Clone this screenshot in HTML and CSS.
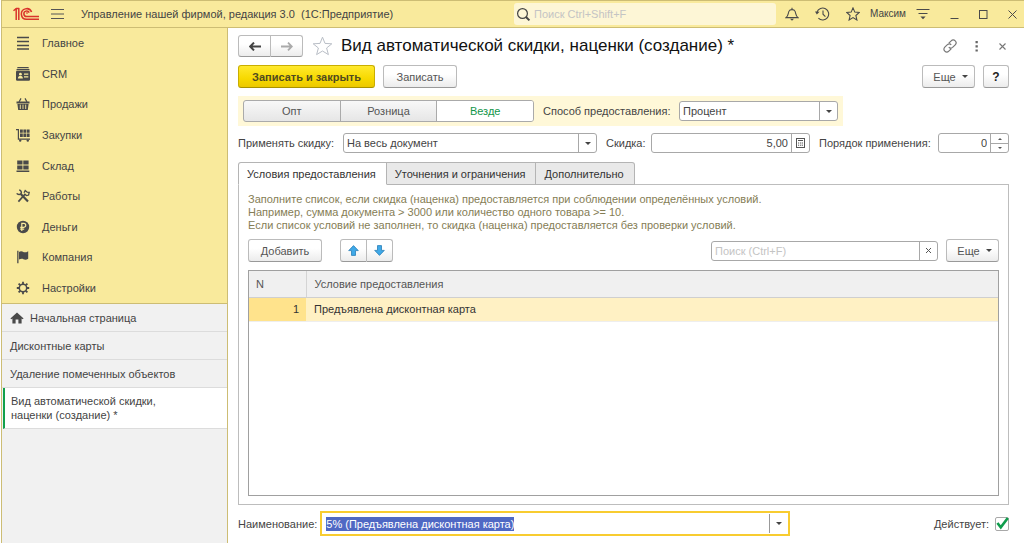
FILE: index.html
```html
<!DOCTYPE html>
<html lang="ru">
<head>
<meta charset="utf-8">
<title>Управление нашей фирмой</title>
<link rel="stylesheet" href="styles.css">
</head>
<body>
<div class="window">

<header class="titlebar">
	<svg class="logo" width="27" height="14" viewBox="0 0 27 14" fill="none" stroke="#d9342b" stroke-width="1.5">
		<path d="M0.5 3.8 L3.2 1.5 M3.2 1 V13 M5.8 1 V13 M3 1.5 H6.2"/>
		<path d="M18.6 5 A5.3 5.3 0 1 0 13.5 12.3 H26"/>
		<path d="M16.2 5.6 A2.8 2.8 0 1 0 13.5 9.6 H26"/>
		<path d="M13.3 6 h1.4"/>
	</svg>
	<button class="ico menu" aria-label="Меню"><svg width="13" height="12" viewBox="0 0 13 12" stroke="#555" stroke-width="1"><path d="M0 1.5H13M0 6H13M0 10.5H13"/></svg></button>
	<span class="apptitle">Управление нашей фирмой, редакция 3.0 &nbsp;(1С:Предприятие)</span>
	<label class="globalsearch">
		<svg width="15" height="15" viewBox="0 0 15 15" fill="none" stroke="#444"><circle cx="6.5" cy="6.5" r="4.9" stroke-width="1.2"/><path d="M10 10L13.4 13.4" stroke-width="2"/></svg>
		<input type="text" placeholder="Поиск Ctrl+Shift+F" aria-label="Поиск">
	</label>
	<div class="wintools">
		<button class="ico" aria-label="Уведомления"><svg width="14" height="14" viewBox="0 0 14 14" fill="none" stroke="#4a4a4a" stroke-width="1.1"><path d="M1 10.6C3.6 8.6 3 6.5 3.9 4.4C4.4 3.2 5.6 2.6 7 2.6S9.6 3.2 10.1 4.4C11 6.5 10.4 8.6 13 10.6Z"/><path d="M7 .8V2.6"/><path d="M5 11.8H9L7 13.7Z" fill="#4a4a4a" stroke="none"/></svg></button>
		<button class="ico" aria-label="История"><svg width="15" height="14" viewBox="0 0 15 14" fill="none" stroke="#4a4a4a" stroke-width="1.1"><path d="M2 5A6 6 0 1 1 3.4 11.2"/><path d="M8 3.6V7.2L10.4 9.6"/><path d="M0 4.4L4.6 4.8L1.8 7.6Z" fill="#4a4a4a" stroke="none"/></svg></button>
		<button class="ico" aria-label="Избранное"><svg width="14" height="14" viewBox="0 0 14 14" fill="none" stroke="#4a4a4a" stroke-width="1.1"><path d="M7 .9L8.8 5.1L13.3 5.5L9.9 8.5L10.9 13L7 10.6L3.1 13L4.1 8.5L.7 5.5L5.2 5.1Z"/></svg></button>
		<span class="user">Максим</span>
		<button class="ico" aria-label="Сервис"><svg width="14" height="12" viewBox="0 0 14 12" fill="none" stroke="#4a4a4a"><path d="M.5 1.5H13.5M2.5 5.5H11.5"/><path d="M4.4 8.4H9.6L7 11.2Z" fill="#4a4a4a" stroke="none"/></svg></button>
		<button class="ico win" aria-label="Свернуть"><svg width="9" height="9" viewBox="0 0 9 9" stroke="#4a4a4a"><path d="M.5 8.5H8.5"/></svg></button>
		<button class="ico win" aria-label="Развернуть"><svg width="9" height="9" viewBox="0 0 9 9" fill="none" stroke="#4a4a4a"><rect x=".5" y=".5" width="7.5" height="8"/></svg></button>
		<button class="ico win" aria-label="Закрыть"><svg width="9" height="9" viewBox="0 0 9 9" stroke="#4a4a4a"><path d="M.5 .5L8.5 8.5M8.5 .5L.5 8.5"/></svg></button>
	</div>
</header>

<div class="body">
<aside class="side">
	<nav class="sections">
		<a href="#"><svg viewBox="0 0 14 14" stroke="#4a4a4a" stroke-width="1.6"><path d="M1 1.5H13M1 5.5H13M1 9.5H13M1 13H13"/></svg>Главное</a>
		<a href="#"><svg viewBox="0 0 14 14" fill="#4a4a4a"><path d="M1.6 0H12.4L13 1.2H1ZM.8 1.9H13.2L13.8 3.2H.2Z"/><rect y="3.8" width="14" height="10" rx="1.2"/><g fill="#f9ea9c"><circle cx="4.4" cy="7.2" r="1.4"/><path d="M1.9 11.4C2 9.4 3 9 4.4 9S6.8 9.4 6.9 11.4ZM8 6.5H12.3V7.7H8ZM8 9.2H12.3V10.4H8Z"/></g></svg>CRM</a>
		<a href="#"><svg viewBox="0 0 14 14" fill="#4a4a4a"><path d="M3 5L5 1.4M11 5L9 1.4" stroke="#4a4a4a" stroke-width="1.2"/><path d="M.5 4.4H13.5V6.4H.5ZM1.4 7H12.6L11.8 13H2.2Z"/><path d="M4.3 7.6V12M7 7.6V12M9.7 7.6V12" stroke="#f9ea9c" stroke-width=".9"/></svg>Продажи</a>
		<a href="#"><svg viewBox="0 0 14 14" fill="#4a4a4a"><path d="M0 1H3V10.5H14V11.7H1.8V2.2H0Z"/><path d="M4 1.4H6.8V4.8H4ZM7.4 1.4H10.2V4.8H7.4ZM10.8 1.4H13.6V4.8H10.8ZM4 5.4H6.8V9H4ZM7.4 5.4H10.2V9H7.4ZM10.8 5.4H13.6V9H10.8Z"/><circle cx="4.2" cy="12.6" r="1.2"/><circle cx="11.8" cy="12.6" r="1.2"/></svg>Закупки</a>
		<a href="#"><svg viewBox="0 0 14 14" fill="#4a4a4a"><path d="M1.2 1.4H6.5V5.6H1.2ZM7.3 1.4H12.6V5.6H7.3ZM1.2 6.4H6.5V10.6H1.2ZM7.3 6.4H12.6V10.6H7.3ZM.5 11.6H13.3V13H.5Z"/></svg>Склад</a>
		<a href="#"><svg viewBox="0 0 14 14" fill="none" stroke="#4a4a4a"><path d="M4.8 5L12 12.4" stroke-width="2.2"/><path d="M9.4 4.8L2.4 12.6" stroke-width="1.7"/><path d="M.7 4.4C2 6 4.6 5.6 5.2 4.2S4.6 1.2 3.2 1" stroke-width="1.5"/><path d="M8 3.8L9.2 1.6L11.2 3.2L13.2 3.4L12.6 6L10.6 6.6L9 5.4" stroke-width="1.3"/></svg>Работы</a>
		<a href="#"><svg viewBox="0 0 14 14"><circle cx="7" cy="7" r="6.2" fill="#4a4a4a"/><path d="M5.8 11V3.4H7.8C10.4 3.4 10.4 7.3 7.8 7.3H4.2M4.2 9.1H8.2" fill="none" stroke="#f9ea9c" stroke-width="1.2"/></svg>Деньги</a>
		<a href="#"><svg viewBox="0 0 14 14" fill="#4a4a4a"><path d="M1.2 .8H2.5V13.2H1.2ZM3 2C5 .8 6.4 1.6 7.4 2.1S10.4 2.4 12.2 1.2V8.8C10.4 10 8.6 9.8 7.4 9.2S4.8 8.6 3 9.6Z"/></svg>Компания</a>
		<a href="#"><svg viewBox="0 0 14 14" fill="none" stroke="#4a4a4a"><circle cx="7" cy="7" r="3.7" stroke-width="1.5"/><path d="M7 .8V3M7 11V13.2M.8 7H3M11 7H13.2M2.6 2.6L4.2 4.2M9.8 9.8L11.4 11.4M11.4 2.6L9.8 4.2M4.2 9.8L2.6 11.4" stroke-width="1.8"/></svg>Настройки</a>
	</nav>
	<nav class="opened">
		<a href="#"><svg class="home" viewBox="0 0 14 12" fill="#4a4a4a"><path d="M7 .5L13.6 6.4L12.6 7.2L11.6 6.6V11.5H8.4V7.6H5.6V11.5H2.4V6.6L1.4 7.2L.4 6.4Z"/></svg>Начальная страница</a>
		<a href="#">Дисконтные карты</a>
		<a href="#">Удаление помеченных объектов</a>
		<a href="#" class="current">Вид автоматической скидки,<br>наценки (создание) *</a>
	</nav>
</aside>

<main class="form">
	<div class="row head">
		<div class="pair">
			<button class="btn" aria-label="Назад"><svg width="12" height="9" viewBox="0 0 12 9"><path d="M5 .6L1.2 4.5L5 8.4M1.4 4.5H12" fill="none" stroke="#444" stroke-width="2"/></svg></button>
			<button class="btn" aria-label="Вперед"><svg width="12" height="9" viewBox="0 0 12 9"><path d="M7 .6L10.8 4.5L7 8.4M10.6 4.5H0" fill="none" stroke="#aaa" stroke-width="1.8"/></svg></button>
		</div>
		<button class="ico fav" aria-label="В избранное"><svg width="21" height="20" viewBox="0 0 21 20" fill="none" stroke="#b9bec6"><path d="M10.5 1.2L13 7.4L19.8 7.8L14.6 12L16.4 18.6L10.5 15L4.6 18.6L6.4 12L1.2 7.8L8 7.4Z"/></svg></button>
		<h1>Вид автоматической скидки, наценки (создание) *</h1>
		<div class="headtools">
			<button class="ico" aria-label="Ссылка"><svg width="14" height="14" viewBox="0 0 14 14" fill="none" stroke="#777" stroke-width="1.2"><path d="M5.8 4.2L8.2 1.8C9.4 .6 11 .6 12.2 1.8S13.4 4.6 12.2 5.8L9.6 8.4C8.4 9.4 6.8 9.4 5.8 8.2"/><path d="M8.2 9.8L5.8 12.2C4.6 13.4 3 13.4 1.8 12.2S.6 9.4 1.8 8.2L4.4 5.6C5.6 4.6 7.2 4.6 8.2 5.8"/></svg></button>
			<button class="ico" aria-label="Действия"><svg width="3" height="11" viewBox="0 0 3 11" fill="#666"><path d="M.5 0H2.8V2.2H.5ZM.5 4.2H2.8V6.4H.5ZM.5 8.4H2.8V10.6H.5Z"/></svg></button>
			<button class="ico" aria-label="Закрыть форму"><svg width="7" height="7" viewBox="0 0 7 7" stroke="#777" stroke-width="1.1"><path d="M.5 .5L6.5 6.5M6.5 .5L.5 6.5"/></svg></button>
		</div>
	</div>

	<div class="row commands">
		<button class="btn primary">Записать и закрыть</button>
		<button class="btn save">Записать</button>
		<button class="btn more push">Еще<i class="caret"></i></button>
		<button class="btn help">?</button>
	</div>

	<div class="scope">
		<div class="switch">
			<button>Опт</button>
			<button>Розница</button>
			<button class="on">Везде</button>
		</div>
		<label for="method" class="l-method">Способ предоставления:</label>
		<div class="field method">
			<select id="method"><option>Процент</option></select>
			<span class="drop"><i class="caret"></i></span>
		</div>
	</div>

	<div class="row params">
		<label for="apply" class="l-apply">Применять скидку:</label>
		<div class="field apply">
			<select id="apply"><option>На весь документ</option></select>
			<span class="drop"><i class="caret"></i></span>
		</div>
		<label for="discount" class="next l-discount">Скидка:</label>
		<div class="field amount">
			<input id="discount" type="text" class="num" value="5,00">
			<button class="drop" aria-label="Калькулятор"><svg width="9" height="10" viewBox="0 0 9 10" fill="none" stroke="#555"><rect x=".5" y=".5" width="8" height="9"/><path d="M2 2.5H7M2 5H3.2M4 5H5.2M5.8 5H7M2 7.2H3.2M4 7.2H5.2M5.8 7.2H7"/></svg></button>
		</div>
		<label for="order" class="next l-order">Порядок применения:</label>
		<div class="field order">
			<input id="order" type="text" class="num" value="0">
			<div class="spin">
				<button aria-label="Больше"><i class="tick up"></i></button>
				<button aria-label="Меньше"><i class="tick"></i></button>
			</div>
		</div>
	</div>

	<div class="tabs">
		<button class="on">Условия предоставления</button>
		<button>Уточнения и ограничения</button>
		<button>Дополнительно</button>
	</div>
	<section class="panel">
		<p class="hint">Заполните список, если скидка (наценка) предоставляется при соблюдении определённых условий.<br>
		Например, сумма документа &gt; 3000 или количество одного товара &gt;= 10.<br>
		Если список условий не заполнен, то скидка (наценка) предоставляется без проверки условий.</p>
		<div class="row listbar">
			<button class="btn add">Добавить</button>
			<div class="pair move">
				<button class="btn" aria-label="Выше"><svg width="11" height="11" viewBox="0 0 11 11"><path d="M5.5 .6L10.3 5.6H7.5V10.4H3.5V5.6H.7Z" fill="#3fa9e8" stroke="#2a7fb8" stroke-width=".8"/></svg></button>
				<button class="btn" aria-label="Ниже"><svg width="11" height="11" viewBox="0 0 11 11"><path d="M5.5 10.4L10.3 5.4H7.5V.6H3.5V5.4H.7Z" fill="#3fa9e8" stroke="#2a7fb8" stroke-width=".8"/></svg></button>
			</div>
			<div class="field find push">
				<input type="text" placeholder="Поиск (Ctrl+F)" aria-label="Поиск по списку">
				<button class="drop" aria-label="Очистить"><svg width="5" height="5" viewBox="0 0 5 5" stroke="#555"><path d="M0 0L5 5M5 0L0 5"/></svg></button>
			</div>
			<button class="btn more">Еще<i class="caret"></i></button>
		</div>
		<div class="list">
			<table>
				<thead><tr><th class="n">N</th><th>Условие предоставления</th></tr></thead>
				<tbody><tr><td class="n">1</td><td>Предъявлена дисконтная карта</td></tr></tbody>
			</table>
		</div>
	</section>

	<div class="row footer">
		<label for="name">Наименование:</label>
		<div class="namefield">
			<input id="name" type="text" value="5% (Предъявлена дисконтная карта)">
			<button aria-label="Выбрать"><i class="caret"></i></button>
		</div>
		<label for="active" class="push">Действует:</label>
		<span class="check">
			<input id="active" type="checkbox" checked>
			<svg width="14" height="14" viewBox="0 0 14 14" fill="none" stroke="#0f9d4c" stroke-width="2.6"><path d="M2.4 6L5.8 10.4L12.8 1"/></svg>
		</span>
	</div>
</main>
</div>
</div>
<script>
var n=document.getElementById("name");
n.focus();
n.select();
</script>
</body>
</html>
```

FILE: styles.css
```css
*{
box-sizing:border-box;
}
body{
margin:0;
background:#fff;
color:#444;
font:11px/14px "Liberation Sans", Arial, sans-serif;
}
button, input, select{
font:inherit;
color:inherit;
margin:0;
padding:0;
border:0;
background:none;
outline:none;
}
svg{
display:block;
flex:none;
}
a{
color:inherit;
text-decoration:none;
}
.window{
display:flex;
flex-direction:column;
height:100vh;
margin-left:1px;
border-left:1px solid #cdbd74;
}

/* title bar */
.titlebar{
display:flex;
align-items:center;
height:28px;
flex:none;
padding:0 7px 0 11px;
background:#f9ea9c;
border-top:1px solid #cdbd74;
border-bottom:1px solid #cdbd74;
}
.ico{
display:flex;
align-items:center;
justify-content:center;
}
.menu{
margin:0 17px 0 11px;
}
.apptitle{
flex:1;
white-space:nowrap;
}
.globalsearch{
display:flex;
align-items:center;
gap:3px;
width:262px;
height:22px;
padding:0 2px;
background:#fdf6d6;
border-radius:3px;
}
.globalsearch input{
flex:1;
min-width:0;
}
::placeholder{
color:#c4c4c4;
opacity:1;
}
.wintools{
display:flex;
align-items:center;
gap:16px;
margin-left:9px;
}
.win{
margin-left:4px;
}
.user{
font-size:10px;
margin:0 -6px;
}

/* left side */
.body{
display:flex;
flex:1;
min-height:0;
}
.side{
width:226px;
flex:none;
background:#f1f1f1;
border-right:1px solid #cdbd74;
}
.sections{
display:flex;
flex-direction:column;
height:276px;
background:#f9ea9c;
border-bottom:1px solid #cdbd74;
}
.sections a{
display:flex;
align-items:center;
flex:1;
gap:12px;
padding-left:14px;
}
.sections svg{
width:14px;
height:14px;
}
.opened a{
display:flex;
align-items:center;
min-height:28px;
padding:6px 8px;
border-bottom:1px solid #dcdcdc;
}
.opened .home{
width:14px;
height:12px;
margin-right:6px;
}
.opened .current{
padding:6px;
margin-left:1px;
background:#fff;
border-left:2px solid #12a04c;
}

/* form */
.form{
display:flex;
flex-direction:column;
flex:1;
min-width:0;
padding:7px 15px 7px 10px;
}
.row{
display:flex;
align-items:center;
flex:none;
}
.btn{
display:flex;
align-items:center;
justify-content:center;
height:23px;
border:1px solid #bbb;
border-bottom-color:#999;
border-radius:3px;
background:linear-gradient(#fff 40%, #ececec);
color:#555;
}
.pair{
display:flex;
}
.pair .btn{
width:33px;
height:22px;
}
.pair .btn:first-child{
border-radius:3px 0 0 3px;
}
.pair .btn:last-child{
width:32px;
border-left:0;
border-radius:0 3px 3px 0;
}
.fav{
margin:0 8px 0 9px;
}
h1{
margin:0;
font-size:17px;
line-height:20px;
font-weight:normal;
color:#111;
white-space:nowrap;
}
.headtools{
display:flex;
align-items:center;
gap:18px;
margin:0 3px 0 auto;
}
.headtools .ico:last-child{
margin-left:3px;
}
.commands{
gap:8px;
margin-top:8px;
}
.primary{
width:137px;
font-weight:bold;
color:#4f4a20;
background:linear-gradient(#ffe92e, #f7d900 60%, #ecc800);
border-color:#c9ae00;
border-bottom-color:#a89200;
}
.save{
width:74px;
}
.more{
gap:6px;
width:53px;
padding-left:4px;
}
.help{
width:26px;
font-weight:bold;
font-size:12px;
color:#222;
}
.caret{
width:0;
height:0;
border:3px solid transparent;
border-top-color:#444;
border-bottom:0;
}

.scope{
display:flex;
align-items:center;
align-self:flex-start;
height:30px;
margin-top:8px;
padding:0 5px;
background:#fff8d8;
}
.switch{
display:flex;
width:291px;
height:22px;
margin-right:9px;
border:1px solid #aaa;
border-radius:3px;
background:linear-gradient(#f8f8f8, #e6e6e6);
overflow:hidden;
}
.switch button{
flex:1;
color:#555;
}
.switch button + button{
border-left:1px solid #aaa;
}
.switch .on{
background:#fff;
color:#12964a;
}
.field{
display:grid;
grid-template-columns:1fr 18px;
height:20px;
margin-left:5px;
border:1px solid #a8a8a8;
border-radius:3px;
background:#fff;
}
.field input, .field select{
grid-row:1;
grid-column:1;
min-width:0;
width:100%;
height:18px;
padding:0 3px;
}
.field select{
grid-column:1 / 3;
appearance:none;
}
.drop{
grid-row:1;
grid-column:2;
display:flex;
align-items:center;
justify-content:center;
border-left:1px solid #a8a8a8;
}
span.drop{
pointer-events:none;
}
.num{
text-align:right;
}
.l-method{
width:131px;
}
.l-apply{
width:100px;
}
.l-discount{
width:40px;
}
.l-order{
width:114px;
}
.method{
width:159px;
}
.apply{
width:254px;
}
.amount{
width:159px;
}
.order{
width:71px;
}
.params{
margin-top:7px;
}
.next{
margin-left:9px;
}
.spin{
display:grid;
grid-template-rows:1fr 1fr;
border-left:1px solid #a8a8a8;
}
.spin button{
display:flex;
align-items:center;
justify-content:center;
}
.spin button + button{
border-top:1px solid #a8a8a8;
}
.tick{
border:2px solid transparent;
border-top-color:#555;
border-bottom:0;
}
.tick.up{
border-top:0;
border-bottom:2px solid #555;
}

/* tabs */
.tabs{
display:flex;
flex:none;
margin-top:9px;
}
.tabs button{
position:relative;
height:23px;
padding:0 10px 0 8px;
border:1px solid #b4b4b4;
border-left-width:0;
background:#e9e9e9;
color:#333;
}
.tabs button:last-child{
border-radius:0 3px 0 0;
}
.tabs .on{
border-left-width:1px;
border-bottom-color:#fff;
border-radius:3px 0 0 0;
background:#fff;
}
.panel{
display:flex;
flex-direction:column;
flex:1;
min-height:0;
margin-top:-1px;
padding:8px 9px;
border:1px solid #bdbdbd;
}
.hint{
margin:0;
line-height:13px;
color:#857d55;
}
.listbar{
margin-top:7px;
}
.add{
width:74px;
}
.move{
margin-left:18px;
}
.move .btn, .move .btn:last-child{
width:26px;
height:23px;
}
.move .btn:first-child{
width:27px;
}
.find{
width:227px;
}
.find + .more{
margin-left:8px;
}
.push{
margin-left:auto;
}
.list{
flex:1;
min-height:0;
margin-top:8px;
border:1px solid #a0a0a0;
overflow:auto;
}
table{
width:100%;
border-collapse:collapse;
table-layout:fixed;
}
th, td{
padding:0 8px;
text-align:left;
font-weight:normal;
}
th{
height:26px;
background:#f0f0f0;
border-bottom:1px solid #cfcfcf;
color:#555;
}
th.n{
width:57px;
border-right:1px solid #d4d4d4;
padding-left:7px;
}
td{
height:24px;
border-top:1px solid #fff;
border-bottom:1px solid #eee;
background:#fff1c4;
color:#333;
}
td.n{
text-align:right;
padding-right:7px;
background:#ffe38c;
}

/* bottom line */
.footer{
margin-top:6px;
}
.namefield{
display:flex;
align-items:center;
width:470px;
height:25px;
margin-left:3px;
border:2px solid #f8cc30;
background:#fff;
}
.namefield input{
flex:1;
min-width:0;
padding:0 4px;
}
.namefield input::selection{
background:#4f68c4;
color:#fff;
}
.namefield button{
display:flex;
align-items:center;
justify-content:center;
width:19px;
height:19px;
border-left:1px solid #999;
}
.check{
display:grid;
margin-left:6px;
}
.check input, .check svg{
grid-area:1 / 1;
}
.check input{
appearance:none;
width:14px;
height:14px;
border:1px solid #a8a8a8;
border-radius:2px;
}
.check svg{
pointer-events:none;
visibility:hidden;
}
.check input:checked + svg{
visibility:visible;
}
```
